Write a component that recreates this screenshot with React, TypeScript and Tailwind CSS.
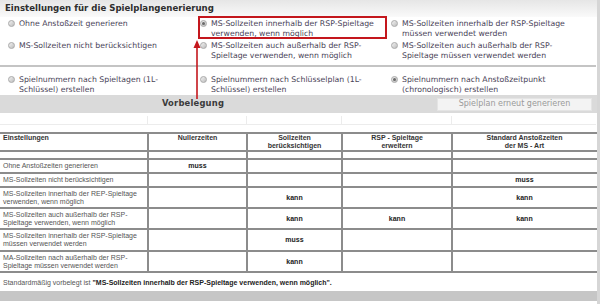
import React from 'react';

const topFont = { fontFamily: '"DejaVu Sans", Verdana, sans-serif' };
const tableFont = { fontFamily: '"Liberation Sans", Arial, sans-serif' };

function Radio({ checked = false }: { checked?: boolean }) {
  return (
    <span className="mt-[1px] flex h-[7px] w-[7px] shrink-0 items-center justify-center rounded-full border border-[#a9a9a9] bg-gradient-to-br from-[#f2f2f2] to-[#bdbdbd]">
      {checked && <span className="h-[3px] w-[3px] rounded-full bg-[#6a6a6a]" />}
    </span>
  );
}

function Option({ lines, checked }: { lines: string[]; checked?: boolean }) {
  return (
    <div className="flex items-start gap-[4px]">
      <Radio checked={checked} />
      <div className="whitespace-nowrap">
        {lines.map((l) => (
          <div key={l}>{l}</div>
        ))}
      </div>
    </div>
  );
}

const cols = 'grid grid-cols-[147px_99px_95px_110px_145px]';

interface Row {
  label: string[];
  values: string[];
  h: string;
}

const rows: Row[] = [
  { label: ['Ohne Anstoßzeiten generieren'], values: ['muss', '', '', ''], h: 'h-[12px]' },
  { label: ['MS-Sollzeiten nicht berücksichtigen'], values: ['', '', '', 'muss'], h: 'h-[12px]' },
  { label: ['MS-Sollzeiten innerhalb der REP-Spieltage', 'verwenden, wenn möglich'], values: ['', 'kann', '', 'kann'], h: 'h-[19px]' },
  { label: ['MS-Sollzeiten auch außerhalb der RSP-', 'Spieltage verwenden, wenn möglich'], values: ['', 'kann', 'kann', 'kann'], h: 'h-[19px]' },
  { label: ['MS-Sollzeiten innerhalb der RSP-Spieltage', 'müssen verwendet werden'], values: ['', 'muss', '', ''], h: 'h-[20px]' },
  { label: ['MA-Sollzeiten nach außerhalb der RSP-', 'Spieltage müssen verwendet werden'], values: ['', 'kann', '', ''], h: 'h-[19px]' },
];

const headers = [['Nullerzeiten'], ['Sollzeiten', 'berücksichtigen'], ['RSP - Spieltage', 'erweitern'], ['Standard Anstoßzeiten', 'der MS - Art']];

export default function App() {
  return (
    <div className="relative h-[304px] w-[600px] overflow-hidden border-r-[3px] border-[#d6d6d6] bg-white">
      {/* Einstellungen */}
      <div style={topFont} className="text-[7.75px] leading-[9.5px] text-[#4a4458]">
        <div className="h-[17px] bg-gradient-to-b from-[#e6e6e6] to-[#fafafa] pl-[5px] text-[8.6px] font-bold leading-[16px] text-[#2e2e2e]">
          Einstellungen für die Spielplangenerierung
        </div>
        <div className="grid grid-cols-[192px_191px_1fr] gap-y-[3px] pl-[8px] pt-[2px]">
          <Option lines={['Ohne Anstoßzeit generieren']} />
          <div className="relative">
            <span className="absolute -top-[3px] -left-[2px] h-[23px] w-[189px] border-2 border-[#c4171d]" />
            <Option lines={['MS-Sollzeiten innerhalb der RSP-Spieltage', 'verwenden, wenn möglich']} checked />
          </div>
          <Option lines={['MS-Sollzeiten innerhalb der RSP-Spieltage', 'müssen verwendet werden']} />
          <Option lines={['MS-Sollzeiten nicht berücksichtigen']} />
          <Option lines={['MS-Sollzeiten auch außerhalb der RSP-', 'Spieltage verwenden, wenn möglich']} />
          <Option lines={['MS-Sollzeiten auch außerhalb der RSP-', 'Spieltage müssen verwendet werden']} />
        </div>
        <div className="mt-[5px] h-[2px] w-[596px] bg-[#c4c4c4]" />
        <div className="grid grid-cols-[192px_191px_1fr] pl-[8px] pt-[8px] pb-[1px]">
          <Option lines={['Spielnummern nach Spieltagen (1L-', 'Schlüssel) erstellen']} />
          <Option lines={['Spielnummern nach Schlüsselplan (1L-', 'Schlüssel) erstellen']} />
          <Option lines={['Spielnummern nach Anstoßzeitpunkt', '(chronologisch) erstellen']} checked />
        </div>
        <div className="flex h-[18px] items-center bg-[#dadada] pr-[5px]">
          <div className="w-[386px] text-center text-[8.4px] font-bold tracking-[0.2px] text-[#3a3a3a]">Vorbelegung</div>
          <div className="ml-auto flex h-[13px] w-[155px] items-center justify-center border border-[#e4e4e4] bg-[#f3f3f3] text-[8px] text-[#9a9a9a]">
            Spielplan erneut generieren
          </div>
        </div>
      </div>

      {/* ghost rows */}
      <div className={`${cols} h-[19px]`}>
        {[0, 1, 2, 3, 4].map((i) => (
          <div key={i} className={`${i > 0 ? 'border-l border-[#e6e6e6]' : ''} mt-[3px] h-[9px] border-b border-[#ececec]`} />
        ))}
      </div>

      {/* Tabelle */}
      <div style={tableFont} className="border-t-2 border-[#8c8c8c] text-[7px] leading-[8px] text-[#555]">
        <div className={`${cols} h-[18px] border-b-2 border-[#8c8c8c] font-bold text-[#333]`}>
          <div className="pl-[3px]">Einstellungen</div>
          {headers.map((h) => (
            <div key={h[0]} className="border-l-2 border-[#8c8c8c] text-center">
              {h.map((l) => (
                <div key={l}>{l}</div>
              ))}
            </div>
          ))}
        </div>
        <div className={`${cols} h-[8px] border-b-2 border-[#8c8c8c]`}>
          <div />
          {[1, 2, 3, 4].map((i) => (
            <div key={i} className="border-l-2 border-[#8c8c8c]" />
          ))}
        </div>
        {rows.map((r) => (
          <div key={r.label[0]} className={`${cols} border-b-2 border-[#8c8c8c]`}>
            <div className={`${r.h} flex flex-col justify-center whitespace-nowrap pl-[3px]`}>
              {r.label.map((l) => (
                <div key={l}>{l}</div>
              ))}
            </div>
            {r.values.map((v, i) => (
              <div key={i} className="flex items-center justify-center border-l-2 border-[#8c8c8c] font-bold text-[#222]">
                {v}
              </div>
            ))}
          </div>
        ))}
        <div className="flex h-[18px] items-center pl-[3px] pt-[2px]">
          Standardmäßig vorbelegt ist&nbsp;
          <span className="font-bold text-[#222]">"MS-Sollzeiten innerhalb der RSP-Spieltage verwenden, wenn möglich".</span>
        </div>
        <div className="h-[10px] bg-[#c6c6c6]" />
      </div>

      {/* Pfeil */}
      <svg className="absolute left-[192px] top-[39px]" width="10" height="60" viewBox="0 0 10 60">
        <path d="M5 6 V60" stroke="#c4171d" strokeWidth="1.6" />
        <path d="M5 1 L8.5 9 L1.5 9 Z" fill="#c4171d" />
      </svg>
    </div>
  );
}
